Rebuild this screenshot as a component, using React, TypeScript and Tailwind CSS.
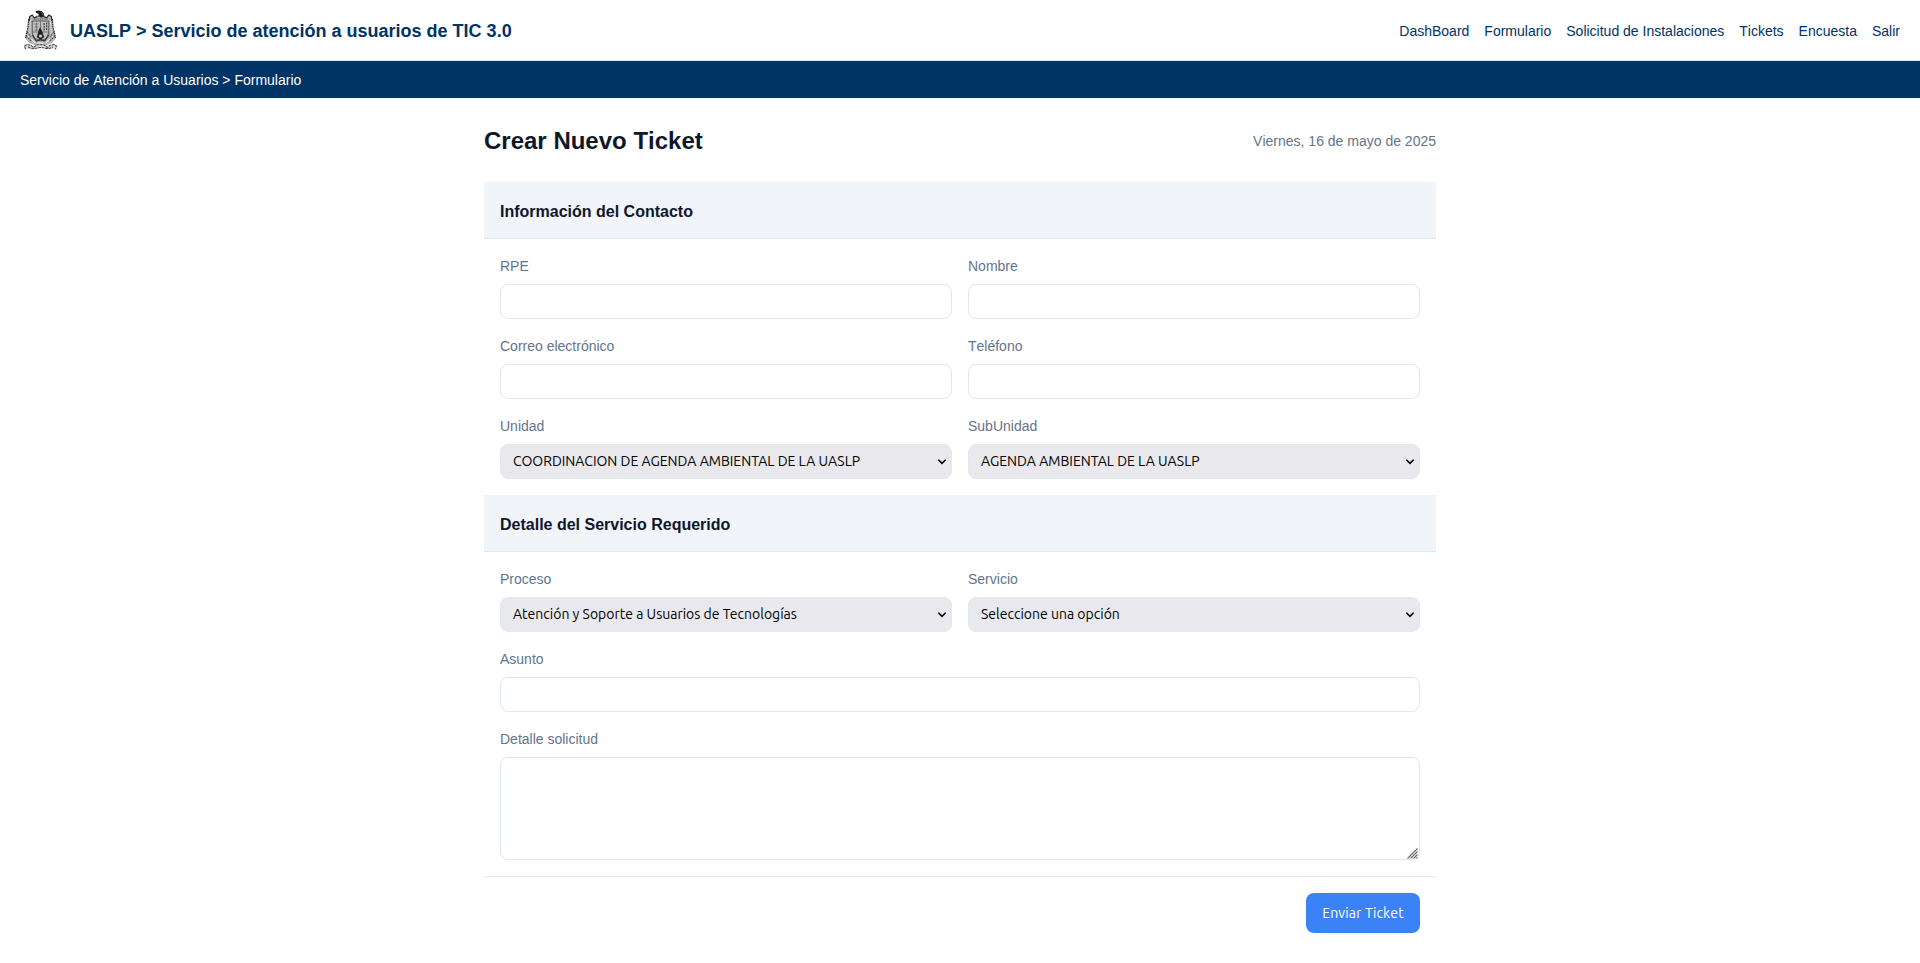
import type { ReactNode } from "react";

const navItems = ["DashBoard", "Formulario", "Solicitud de Instalaciones", "Tickets", "Encuesta", "Salir"];

function Crest() {
  return (
    <svg viewBox="0 0 32 40" preserveAspectRatio="none" className="h-10 w-[33px] shrink-0" fill="none" aria-hidden="true">
      {/* wings and body */}
      <path
        d="M5 6 L8 5 L10 7 L12 5.5 L20 5.5 L22 7 L24 5 L27 6 L28 12 L29 20 L31 28 L27 33 L22 35 L10 35 L5 33 L1 28 L3 20 L4 12 Z"
        fill="#b4b4b4"
      />
      {/* eagle head */}
      <path d="M11 1.2 L14 0.4 L17 1 L19 3 L19.5 6 L17.5 7.5 L13.5 6.5 L14.5 4 L12 3 Z" fill="#1c1c1c" />
      <path d="M16.5 1.8 L18.5 5.5 M14.5 5.5 L17 9" stroke="#6a6a6a" strokeWidth=".7" />
      {/* wing contours */}
      <path d="M5 11 L5.5 6.5 L8 5 L10 8 L13 6.5 M27 11 L26.5 6.5 L24 5 L22 8 L19 6.5" stroke="#222" strokeWidth="1.1" />
      <path d="M4.5 9 L4 17 L2.5 23 L1.5 28 M27.5 9 L28 17 L29.5 23 L30.5 28" stroke="#333" strokeWidth="1.2" strokeDasharray="1.6 .7" />
      <path d="M6.5 10 L5.5 22 L3.5 30 M25.5 10 L26.5 22 L28.5 30" stroke="#eee" strokeWidth=".8" strokeDasharray="1.3 1" />
      <path d="M3 22 L7 27 M2 26 L7 31 M29 22 L25 27 M30 26 L25 31" stroke="#444" strokeWidth="1" strokeDasharray="1.8 .8" />
      {/* quartered shield */}
      <path d="M8 11 H24 V23 L22 28 L16 31 L10 28 L8 23 Z" fill="#c0c0c0" stroke="#444" strokeWidth=".8" />
      <path d="M16 11 V22 M8.5 22 H23.5" stroke="#666" strokeWidth=".8" />
      <path d="M10 14 H14 M10 17 H14 M10 20 H14 M12 12.5 V21" stroke="#777" strokeWidth="1" />
      <path d="M19.5 13 V21 M22 12.5 V21" stroke="#383838" strokeWidth="1.1" strokeDasharray="2 .8" />
      <path d="M9 9 H23" stroke="#777" strokeWidth="1.4" strokeDasharray="1.3 .8" />
      {/* inner medallion */}
      <path d="M15.5 17 L17.5 21 L19.5 27 L16 30 L12.5 27 L14 21 Z" fill="#222" />
      <circle cx="16" cy="26" r="1.6" fill="#ccc" />
      <path d="M8 25 L12 31 L16 29.5 L20 31 L24 25" stroke="#333" strokeWidth="1.2" />
      <path d="M7 29 L11 33 M25 29 L21 33 M13 33 H19" stroke="#f4f4f4" strokeWidth="1" />
      {/* ribbon */}
      <path d="M.5 36 L3 34.5 L7 35.5 L9 37.5 L13 34.5 H19 L23 37.5 L25 35.5 L29 34.5 L31.5 36 L30 39 L24 38.8 L16 37.4 L8 38.8 L2 39 Z" fill="#dcdcdc" />
      <path
        d="M1.5 39.3 L.5 36 L3 34.5 L7 35.5 L9 37.5 L13 34.8 H19 L23 37.5 L25 35.5 L29 34.5 L31.5 36 L30.5 39.3 M4 37 L8 38.8 L16 37.4 L24 38.8 L28 37"
        stroke="#444"
        strokeWidth="1"
        strokeDasharray="2.8 .6"
      />
    </svg>
  );
}

function SectionTitle({ children }: { children: ReactNode }) {
  return (
    <div className="flex h-[57px] items-center border-b border-slate-200 bg-[#f1f4f9] px-4 pt-[3px]">
      <h2 className="text-base font-bold text-[#0f172a]">{children}</h2>
    </div>
  );
}

function Field({ id, label, wide = false, children }: { id: string; label: string; wide?: boolean; children: ReactNode }) {
  return (
    <div className={wide ? "col-span-2" : ""}>
      <label htmlFor={id} className="mb-2 block text-sm leading-5 text-[#64748b]">
        {label}
      </label>
      {children}
    </div>
  );
}

function TextInput({ id }: { id: string }) {
  return <input id={id} className="block h-[35px] w-full rounded-lg border border-slate-200 bg-white px-2 text-sm" />;
}

function Select({ id, value }: { id: string; value: string }) {
  return (
    <div className="grid items-center">
      <select
        id={id}
        defaultValue={value}
        className="col-start-1 row-start-1 h-[35px] w-full appearance-none rounded-lg border border-slate-200 bg-[#e9e9ed] pr-8 pb-px pl-3 font-['Ubuntu','Open_Sans',sans-serif] text-sm text-black [font-kerning:auto]"
      >
        <option>{value}</option>
      </select>
      <svg viewBox="0 0 10 6" className="pointer-events-none col-start-1 row-start-1 mr-[5px] h-1.5 w-2.5 justify-self-end" fill="none">
        <path d="M1.4 .8 L5 4.4 L8.6 .8" stroke="#000" strokeWidth="1.5" />
      </svg>
    </div>
  );
}

export default function App() {
  return (
    <div className="min-h-screen bg-white font-['Liberation_Sans',Arial,sans-serif] [font-kerning:none]">
      <header className="flex h-[61px] items-center justify-between border-b border-slate-200 px-5">
        <div className="flex items-center pl-1">
          <Crest />
          <h1 className="ml-[13px] pt-0.5 text-lg font-bold text-[#003366]">UASLP &gt; Servicio de atención a usuarios de TIC 3.0</h1>
        </div>
        <nav className="flex gap-[15px] pt-0.5 text-sm text-[#003366]">
          {navItems.map((item) => (
            <a key={item} href="#">
              {item}
            </a>
          ))}
        </nav>
      </header>
      <div className="flex h-[37px] items-center bg-[#003366] px-5 text-sm text-white">
        Servicio de Atención a Usuarios &gt; Formulario
      </div>

      <main className="mx-auto w-[952px] pt-6">
        <div className="mb-6 flex h-9 items-center justify-between pt-0.5">
          <h2 className="text-2xl font-bold text-[#0f172a]">Crear Nuevo Ticket</h2>
          <span className="text-sm text-[#64748b]">Viernes, 16 de mayo de 2025</span>
        </div>

        <form>
          <SectionTitle>Información del Contacto</SectionTitle>
          <div className="grid grid-cols-2 gap-x-4 gap-y-[17px] px-4 pt-[17px] pb-4">
            <Field id="rpe" label="RPE">
              <TextInput id="rpe" />
            </Field>
            <Field id="nombre" label="Nombre">
              <TextInput id="nombre" />
            </Field>
            <Field id="correo" label="Correo electrónico">
              <TextInput id="correo" />
            </Field>
            <Field id="telefono" label="Teléfono">
              <TextInput id="telefono" />
            </Field>
            <Field id="unidad" label="Unidad">
              <Select id="unidad" value="COORDINACION DE AGENDA AMBIENTAL DE LA UASLP" />
            </Field>
            <Field id="subunidad" label="SubUnidad">
              <Select id="subunidad" value="AGENDA AMBIENTAL DE LA UASLP" />
            </Field>
          </div>

          <SectionTitle>Detalle del Servicio Requerido</SectionTitle>
          <div className="grid grid-cols-2 gap-x-4 gap-y-[17px] px-4 pt-[17px] pb-4">
            <Field id="proceso" label="Proceso">
              <Select id="proceso" value="Atención y Soporte a Usuarios de Tecnologías" />
            </Field>
            <Field id="servicio" label="Servicio">
              <Select id="servicio" value="Seleccione una opción" />
            </Field>
            <Field id="asunto" label="Asunto" wide>
              <TextInput id="asunto" />
            </Field>
            <Field id="detalle" label="Detalle solicitud" wide>
              <div className="grid">
                <textarea
                  id="detalle"
                  className="col-start-1 row-start-1 block h-[103px] w-full resize-none rounded-lg border border-slate-200 bg-white p-2 text-sm"
                />
                <svg viewBox="0 0 11 11" className="pointer-events-none col-start-1 row-start-1 mr-0.5 mb-px h-[11px] w-[11px] self-end justify-self-end" fill="none">
                  <path d="M.5 10.5 L10.5 .5 M3.5 10.5 L10.5 3.5 M6.5 10.5 L10.5 6.5 M9.5 10.5 L10.5 9.5" stroke="#666" strokeWidth="1.1" />
                </svg>
              </div>
            </Field>
          </div>

          <div className="flex justify-end border-t border-slate-200 p-4">
            <button
              type="button"
              className="h-10 w-[114px] rounded-lg bg-[#3b82f6] text-center font-['Ubuntu','Open_Sans',sans-serif] text-sm tracking-[0.15px] whitespace-nowrap text-white [font-kerning:none]"
            >
              Enviar Ticket
            </button>
          </div>
        </form>
      </main>
    </div>
  );
}
